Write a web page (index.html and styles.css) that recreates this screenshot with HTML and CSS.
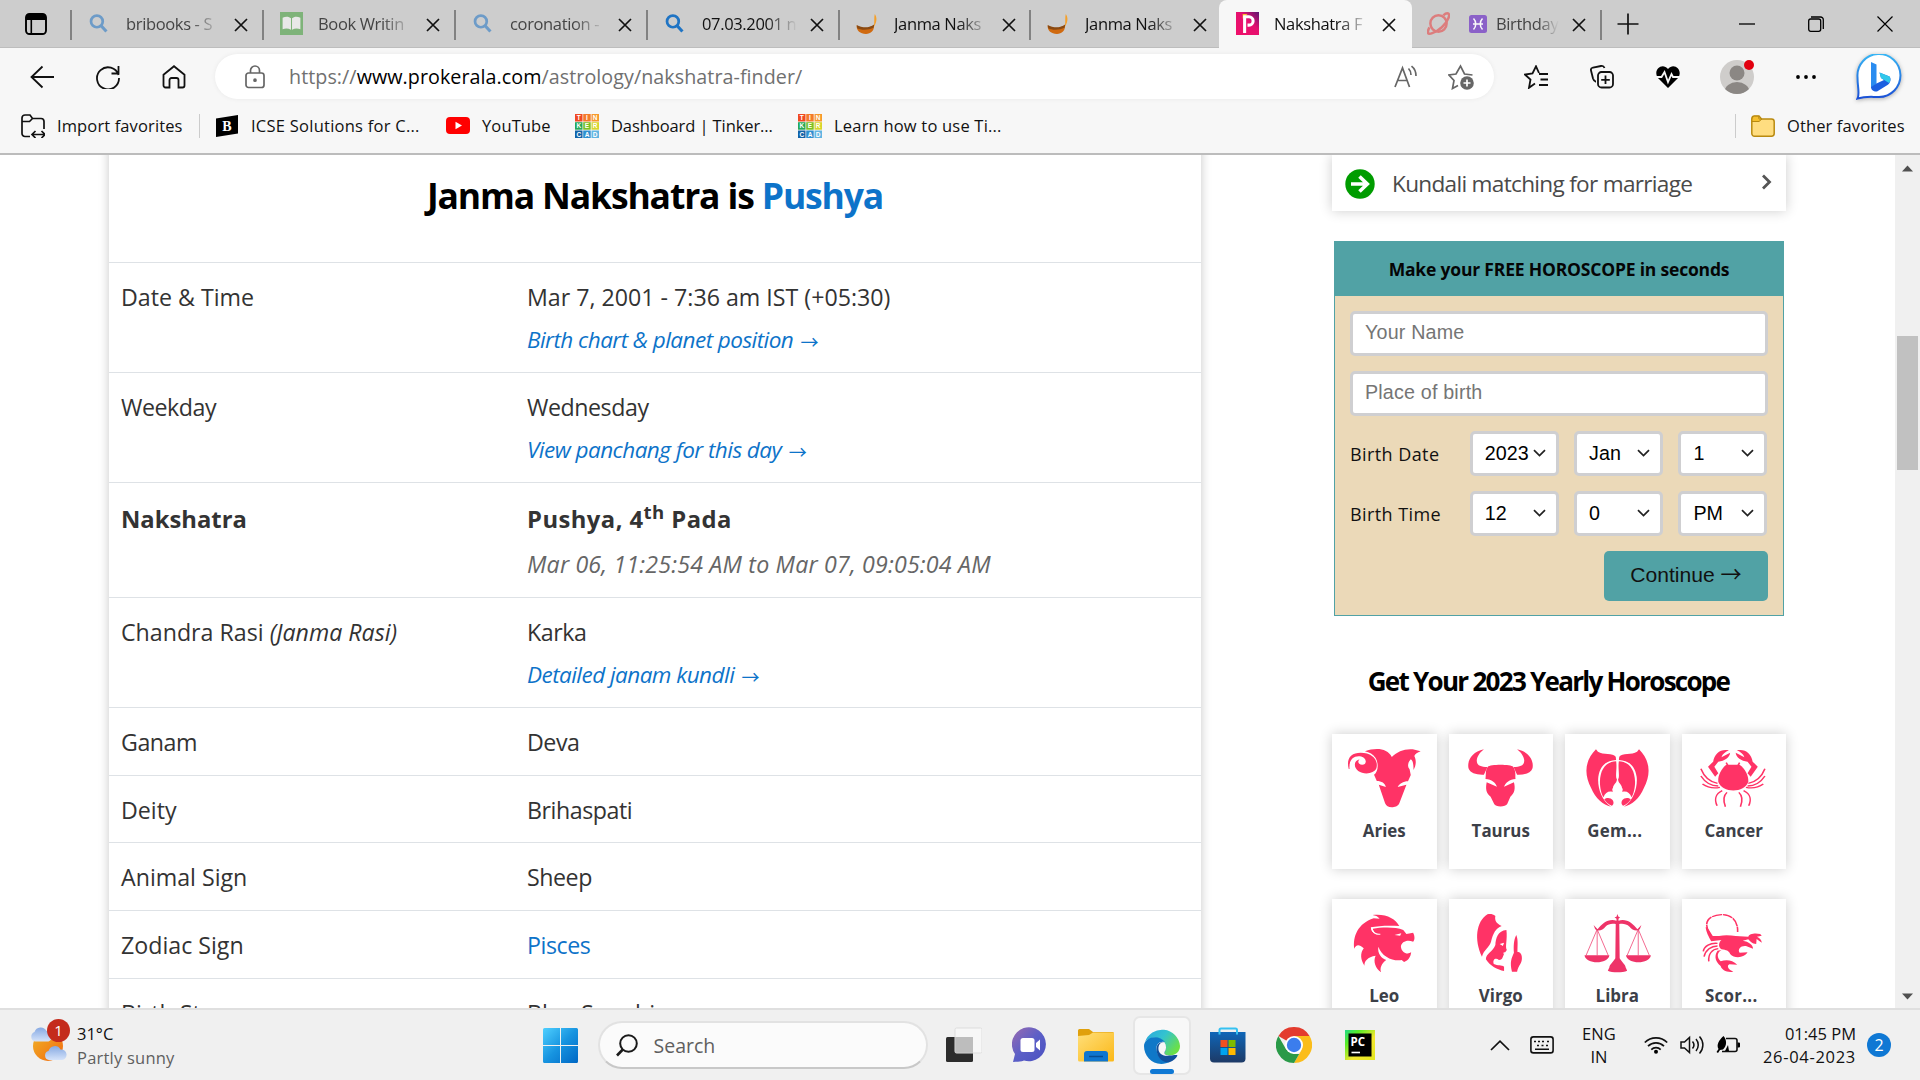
FILE: index.html
```html
<!DOCTYPE html>
<html lang="en">
<head>
<meta charset="utf-8">
<title>Nakshatra Finder</title>
<link rel="stylesheet" href="styles.css">
</head>
<body>
<svg class="defs" width="0" height="0" aria-hidden="true">
  <defs>
    <symbol id="x" viewBox="0 0 14 14"><path d="M1 1L13 13M13 1L1 13" fill="none" stroke="currentColor" stroke-width="1.7"/></symbol>
    <symbol id="mag" viewBox="0 0 22 22"><g fill="none" stroke="#1f74c4"><circle cx="8.500" cy="9" r="5.600" stroke-width="2.600"/><path d="M12.600 13.200L17.600 18.600" stroke-width="3"/></g></symbol>
    <symbol id="lamp" viewBox="0 0 22 22"><path d="M18 2C20 5 20.500 9 17 14.500C18 9 17 5 18 2Z" fill="#f5a02a"/><path d="M.5 13C5 16 13 16 17 12.500C18 18 14 21 9.500 21C4 21 .5 18 .5 13Z" fill="#d06a10"/><path d="M.7 12.500C6 15.500 13 15.500 17.300 12L17 14.800C12 17.500 5 17.500 1.200 15.500Z" fill="#8a4a12"/></symbol>
    <symbol id="tinker" viewBox="0 0 24 24">
      <path fill="#f04923" d="M0 0h7.500v7.500H0z"/><path fill="#f47b2a" d="M8.200 0h7.500v7.500H8.200z"/><path fill="#f79a2c" d="M16.500 0H24v7.500h-7.500z"/>
      <path fill="#26a95a" d="M0 8.200h7.500v7.500H0z"/><path fill="#7cc023" d="M8.200 8.200h7.500v7.500H8.200z"/><path fill="#d8d62d" d="M16.500 8.200H24v7.500h-7.500z"/>
      <path fill="#1263a8" d="M0 16.500h7.500V24H0z"/><path fill="#2f8fd0" d="M8.200 16.500h7.500V24H8.200z"/><path fill="#62b5e2" d="M16.500 16.500H24V24h-7.500z"/>
      <g class="tk"><text x="3.800" y="6.200">T</text><text x="12" y="6.200">I</text><text x="20.200" y="6.200">N</text><text x="3.800" y="14.400">K</text><text x="12" y="14.400">E</text><text x="20.200" y="14.400">R</text><text x="3.800" y="22.700">C</text><text x="12" y="22.700">A</text><text x="20.200" y="22.700">D</text></g>
    </symbol>
    <symbol id="chev" viewBox="0 0 13 8"><path d="M1 1.200L6.500 6.600L12 1.200" fill="none" stroke="#222" stroke-width="1.700"/></symbol>
    <linearGradient id="gWin" x1="0" y1="0" x2="1" y2="1"><stop offset="0" stop-color="#4fd0ff"/><stop offset=".5" stop-color="#1794e0"/><stop offset="1" stop-color="#0067c4"/></linearGradient>
    <linearGradient id="gCloud" x1="0" y1="0" x2="0" y2="1"><stop offset="0" stop-color="#86a9e2"/><stop offset="1" stop-color="#d5e3fa"/></linearGradient>
    <linearGradient id="gSun" x1="0" y1="0" x2="1" y2="1"><stop offset="0" stop-color="#f0b429"/><stop offset="1" stop-color="#f2680e"/></linearGradient>
    <linearGradient id="gChat" x1="0" y1="0" x2="1" y2="1"><stop offset="0" stop-color="#9b6bb0"/><stop offset=".5" stop-color="#5b5fc7"/><stop offset="1" stop-color="#4a50c0"/></linearGradient>
    <linearGradient id="gFold" x1="0" y1="0" x2="1" y2="1"><stop offset="0" stop-color="#ffdf7a"/><stop offset="1" stop-color="#fbb818"/></linearGradient>
    <linearGradient id="gEdgeA" x1="0" y1="0" x2="1" y2=".6"><stop offset="0" stop-color="#2aa6e0"/><stop offset=".5" stop-color="#33c3cf"/><stop offset="1" stop-color="#6be046"/></linearGradient>
    <linearGradient id="gStore" x1="0" y1="0" x2="0" y2="1"><stop offset="0" stop-color="#0f66b8"/><stop offset="1" stop-color="#1d3a66"/></linearGradient>
    <linearGradient id="gPc" x1="0" y1="0" x2="1" y2="1"><stop offset="0" stop-color="#21d789"/><stop offset=".25" stop-color="#58ec26"/><stop offset=".6" stop-color="#f4e72f"/><stop offset="1" stop-color="#e3e61f"/></linearGradient>
    <linearGradient id="gBing" x1="0" y1="0" x2="0" y2="1"><stop offset="0" stop-color="#38b6f5"/><stop offset="1" stop-color="#1a4fd6"/></linearGradient>
    <linearGradient id="gProk" x1="0" y1="1" x2="1" y2="0"><stop offset="0" stop-color="#f0106a"/><stop offset=".6" stop-color="#e4106f"/><stop offset="1" stop-color="#5a1670"/></linearGradient>
  </defs>
</svg>

<header class="tabs">
  <div class="tab-menu"><svg width="22" height="22" viewBox="0 0 22 22"><rect x="1" y="1" width="20" height="20" rx="3.500" fill="none" stroke="#000" stroke-width="1.900"/><path d="M1 7V4a3 3 0 0 1 3-3h14a3 3 0 0 1 3 3v3z"/><path d="M6.300 7v14" stroke="#000" stroke-width="1.600"/></svg></div>
  <div class="tab dim"><svg class="fav" viewBox="0 0 22 22"><use href="#mag"/></svg><span class="tab-t">bribooks - S</span><svg class="tab-x"><use href="#x"/></svg></div>
  <div class="tab dim"><svg class="fav" viewBox="0 0 22 22"><path fill="#3f9e35" d="M0 0h22v22H0z"/><path fill="#fff" d="M2.500 5.500C5.500 4 8.500 4.200 10.500 6v11C8 15.600 5 15.600 2.500 16.500zM19.500 5.500C16.500 4 13.500 4.200 11.500 6v11C14 15.600 17 15.600 19.500 16.500z"/></svg><span class="tab-t">Book Writin</span><svg class="tab-x"><use href="#x"/></svg></div>
  <div class="tab dim"><svg class="fav" viewBox="0 0 22 22"><use href="#mag"/></svg><span class="tab-t">coronation -</span><svg class="tab-x"><use href="#x"/></svg></div>
  <div class="tab"><svg class="fav" viewBox="0 0 22 22"><use href="#mag"/></svg><span class="tab-t">07.03.2001 n</span><svg class="tab-x"><use href="#x"/></svg></div>
  <div class="tab slim"><svg class="fav" viewBox="0 0 22 22"><use href="#lamp"/></svg><span class="tab-t">Janma Naks</span><svg class="tab-x"><use href="#x"/></svg></div>
  <div class="tab no-sep"><svg class="fav" viewBox="0 0 22 22"><use href="#lamp"/></svg><span class="tab-t">Janma Naks</span><svg class="tab-x"><use href="#x"/></svg></div>
  <div class="tab active"><svg class="fav" viewBox="0 0 24 24"><path fill="url(#gProk)" d="M0 0h24v24H0z"/><path fill="#f8c02a" d="M7 2h5L7 7z"/><path fill="none" stroke="#fff" stroke-width="3.200" d="M9 22V5h4.500a4.300 4.300 0 0 1 0 8.700H12"/></svg><span class="tab-t">Nakshatra F</span><svg class="tab-x"><use href="#x"/></svg></div>
  <div class="tab dim last"><svg class="fav" viewBox="0 0 24 24"><g fill="none" stroke="#ea3d3d" stroke-width="2.600"><circle cx="12" cy="12" r="8.500"/><path d="M17 3.500C21 0 24.500 1 22.500 6C20 13 12 20 5.500 22C0 24 0 21 2.500 16"/></g></svg><span class="pisces"><svg width="18" height="18" viewBox="0 0 18 18"><rect width="18" height="18" rx="2.500" fill="#8456c8"/><path d="M4.500 3.500c3 3 3 8 0 11M13.500 3.500c-3 3-3 8 0 11M4 9h10" stroke="#fff" stroke-width="1.500" fill="none"/></svg></span><span class="tab-t">Birthday</span><svg class="tab-x"><use href="#x"/></svg></div>
  <svg class="plus" width="22" height="22" viewBox="0 0 22 22"><path d="M11 .5v21M.5 11h21" stroke="#111" stroke-width="1.700"/></svg>
  <div class="win">
    <svg width="16" height="16" viewBox="0 0 16 16"><path d="M0 8h16" stroke="#000" stroke-width="1.300"/></svg>
    <svg width="16" height="16" viewBox="0 0 16 16"><g fill="none" stroke="#000" stroke-width="1.300"><rect x=".7" y="3" width="12" height="12.300" rx="2"/><path d="M3 1h9.500A2.700 2.700 0 0 1 15.300 3.700V13"/></g></svg>
    <svg width="16" height="16" viewBox="0 0 16 16"><path d="M.5 .5L15.500 15.500M15.500 .5L.5 15.500" stroke="#000" stroke-width="1.200"/></svg>
  </div>
</header>

<nav class="toolbar">
  <svg class="ic" viewBox="0 0 24 24"><path d="M12.500 1.500L1.500 12L12.500 22.500M1.500 12H24"/></svg>
  <svg class="ic" viewBox="0 0 24 24"><path d="M22.500 10A11 11 0 1 0 23 13M22.500 1v7.500h-7"/></svg>
  <svg class="ic" viewBox="0 0 24 24"><path d="M1.500 9.800L12 1.200L22.500 9.800V20.500a2 2 0 0 1-2 2h-4v-7.500a2 2 0 0 0-2-2h-5a2 2 0 0 0-2 2v7.500h-4a2 2 0 0 1-2-2z"/></svg>
  <div class="pill">
    <svg class="ic grey lock" viewBox="0 0 22 24"><rect x="2" y="8" width="18" height="14.500" rx="2.500"/><path d="M6.500 8V5.500a4.500 4.500 0 0 1 9 0V8"/><circle cx="11" cy="15.200" r="1" fill="#555"/></svg>
    <span class="url">https://<b>www.prokerala.com</b>/astrology/nakshatra-finder/</span>
    <svg class="ic grey read" viewBox="0 0 24 24"><path d="M1 22L8.500 3L15.500 22M3.500 15.500h9.500M14.500 3.500c1.700 1.700 2.500 4 2.500 6.500M17.500 1.200C20.500 3.500 22 7 22 11"/></svg>
    <svg class="ic grey star" viewBox="0 0 26 26"><path d="M10 21.500l-5.500 3 1.500-8L1 11l7-1L12.500 2l4 8 8 1"/><circle cx="19" cy="19" r="6.800" fill="#666" stroke="none"/><path d="M19 15.500v7M15.500 19h7" stroke="#fff"/></svg>
  </div>
  <div class="acts">
    <svg class="ic" viewBox="0 0 24 24"><path d="M11 18.500L5 22.800L6.500 14.500L.9 9.500L8.500 8.500L12 1.300L15 8M15 9h9M16.500 14.500H24M15 20h9"/></svg>
    <svg class="ic" viewBox="0 0 24 24"><path d="M6 16.500H5.500C4 16 3.500 15 3 13.500L1 5.500C.6 4 1.500 3 3 2.500L11 1c2-.4 3 .6 3.500 2"/><rect x="8" y="7" width="15" height="15.500" rx="3.500"/><path d="M15.500 10.500v8.500M11.200 14.800h8.600"/></svg>
    <svg class="ic" viewBox="0 0 24 24"><path d="M12 23L1.500 12.500C-3 5 6-3 12 4C18-3 27 5 22.500 12.500z" fill="#000" stroke="none"/><path d="M0 12h5.500l3-5 3.500 10 3.500-8 1.500 3H24" stroke="#f7f7f7"/></svg>
  </div>
  <div class="avatar"><svg width="34" height="34" viewBox="0 0 34 34"><clipPath id="av"><circle cx="17" cy="17" r="17"/></clipPath><g clip-path="url(#av)"><path fill="#cfcdcb" d="M0 0h34v34H0z"/><circle cx="17" cy="13" r="7.500" fill="#8b8784"/><ellipse cx="17" cy="32" rx="12.500" ry="10" fill="#8b8784"/></g></svg><i class="dot"></i></div>
  <svg class="more" width="22" height="6" viewBox="0 0 22 6"><circle cx="3" cy="3" r="1.900"/><circle cx="11" cy="3" r="1.900"/><circle cx="19" cy="3" r="1.900"/></svg>
  <svg class="bing" width="46" height="46" viewBox="0 0 46 46"><path d="M1.500 44.500C4 40 1.500 34 1.500 23A21.500 21.500 0 1 1 23 43C15 43 10 42 1.500 44.500Z" fill="#fff" stroke="url(#gBing)" stroke-width="2"/><path d="M15 8L20.500 10.500V30L15 34Z" fill="#2a8cf0"/><path d="M15 33L20.500 29.500L28 26L25 24L23.500 18.500L33.500 22.500C35.500 25 34.500 29 31.500 31L21 37.500C18 38 15 36 15 33Z" fill="#1b5fe0"/><path d="M25 24L23.500 18.500L33.500 22.500C35 25 34 28 33 29Z" fill="#30c8ea"/></svg>
</nav>

<div class="bookmarks">
  <svg class="bm" viewBox="0 0 24 24"><g fill="none" stroke="#111" stroke-width="1.700"><path d="M9 22.500H4a3 3 0 0 1-3-3V4a3 3 0 0 1 3-3h5l2.500 3.500H20a3 3 0 0 1 3 3V15M1 7.500h7.500L11.500 4.500M11.500 20.500h12M14.500 17l-3.500 3.500 3.500 3.500M20.500 17l3.500 3.500-3.500 3.500"/></g></svg><span class="bt t1">Import favorites</span>
  <i class="vsep"></i>
  <svg class="bm b-ic" viewBox="0 0 22 22"><path d="M0 3.500L22 0V18.500L0 22Z"/><text x="11" y="16" class="bserif">B</text></svg><span class="bt t2">ICSE Solutions for C...</span>
  <svg class="bm yt" viewBox="0 0 24 17"><rect width="24" height="17" rx="4" fill="#f00"/><path d="M9.500 4.800L16 8.500L9.500 12.200z" fill="#fff"/></svg><span class="bt t3">YouTube</span>
  <svg class="bm tkc"><use href="#tinker"/></svg><span class="bt t4">Dashboard | Tinker...</span>
  <svg class="bm tkc"><use href="#tinker"/></svg><span class="bt t5">Learn how to use Ti...</span>
  <div class="other"><i class="vsep"></i><svg class="bm" viewBox="0 0 24 22"><path d="M.8 4A3 3 0 0 1 3.500 1H8l2.500 3h10a2.700 2.700 0 0 1 2.700 2.700V18.500a2.700 2.700 0 0 1-2.700 2.700H3.500A2.700 2.700 0 0 1 .8 18.500z" fill="#ffdd80" stroke="#b98a10" stroke-width="1.500"/><path d="M1 6.500h7L11 4H8L7.500 1.200H3.500Q1 1.500 1 4z" fill="#f5bf2e" stroke="#b98a10"/></svg><span class="bt">Other favorites</span></div>
</div>

<div class="page">
  <main class="card">
    <h1>Janma Nakshatra is <em>Pushya</em></h1>
    <div class="row two"><div>Date &amp; Time</div><div>Mar 7, 2001 - 7:36 am IST (+05:30)<br><a class="it">Birth chart &amp; planet position <span class="arr">→</span></a></div></div>
    <div class="row two"><div class="w">Weekday</div><div><span class="w">Wednesday</span><br><a class="it">View panchang for this day <span class="arr">→</span></a></div></div>
    <div class="row nak"><div><b>Nakshatra</b></div><div><b class="pada">Pushya, 4<sup>th</sup> Pada</b><br><span class="it gr">Mar 06, 11:25:54 AM to Mar 07, 09:05:04 AM</span></div></div>
    <div class="row two"><div>Chandra Rasi <i>(Janma Rasi)</i></div><div><span class="w">Karka</span><br><a class="it">Detailed janam kundli <span class="arr">→</span></a></div></div>
    <div class="row"><div class="w">Ganam</div><div class="w">Deva</div></div>
    <div class="row"><div>Deity</div><div class="w">Brihaspati</div></div>
    <div class="row"><div>Animal Sign</div><div class="w">Sheep</div></div>
    <div class="row"><div>Zodiac Sign</div><div class="w"><a>Pisces</a></div></div>
    <div class="row"><div>Birth Star</div><div>Blue Sapphire</div></div>
  </main>
  <aside class="side">
    <div class="kund"><svg width="30" height="30" viewBox="0 0 30 30"><circle cx="15" cy="15" r="14.700" fill="#009c00"/><path d="M6 15h16M14.500 7.500L22.300 15l-7.800 7.500" fill="none" stroke="#fff" stroke-width="3.600"/></svg><span>Kundali matching for marriage</span><svg class="kc" width="11" height="16" viewBox="0 0 11 16"><path d="M2 1.500L8.500 8L2 14.500" fill="none" stroke="#555" stroke-width="2.800"/></svg></div>
    <form class="form">
      <div class="fh">Make your FREE HOROSCOPE in seconds</div>
      <div class="fb">
        <div class="inp">Your Name</div>
        <div class="inp">Place of birth</div>
        <div class="sel"><label>Birth Date</label><div>2023<svg><use href="#chev"/></svg></div><div>Jan<svg><use href="#chev"/></svg></div><div>1<svg><use href="#chev"/></svg></div></div>
        <div class="sel"><label>Birth Time</label><div>12<svg><use href="#chev"/></svg></div><div>0<svg><use href="#chev"/></svg></div><div>PM<svg><use href="#chev"/></svg></div></div>
        <div class="btn">Continue <span class="arr">→</span></div>
      </div>
    </form>
    <h2>Get Your 2023 Yearly Horoscope</h2>
    <div class="signs">
      <div class="sign"><svg viewBox="112.500 321 200 186" preserveAspectRatio="none"><path d="M122 387C115 355 128 338 152 338C180 338 198 358 192 385C186 402 160 405 146 393C134 382 134 362 150 358C143 364 146 374 156 374C170 374 168 352 150 349C132 347 122 362 124 387Z"/><path d="M163 334C190 322 220 324 231 351C245 335 262 326 284 328L304 334C296 338 290 342 288 348C294 362 292 378 286 390C286 375 285 362 279 358C271 368 270 380 276 388L279 405L272 424C260 424 250 432 246 441L268 434L250 490C246 500 238 502 231 502C222 502 217 498 214 490L198 434L216 441C214 430 205 423 193 423L186 404C197 396 198 370 190 354C184 343 174 337 163 334Z"/></svg><span>Aries</span></div>
      <div class="sign"><svg viewBox="407 321 200 186" preserveAspectRatio="none"><path d="M465 328C435 335 422 362 426 385C430 400 447 405 465 404L474 381C455 381 446 375 447 360C449 345 458 335 465 328Z"/><path d="M549 328C579 335 592 362 588 385C584 400 567 405 549 404L540 381C559 381 568 375 567 360C565 345 556 335 549 328Z"/><path d="M475 380C480 372 534 372 539 380C547 395 544 405 545 417C530 418 520 428 516 440L541 427C545 445 543 460 532 470L524 492C520 502 494 502 491 492L482 470C470 460 469 445 472 427L498 440C494 428 485 418 469 417C471 400 468 392 475 380Z"/></svg><span>Taurus</span></div>
      <div class="sign"><svg viewBox="701.500 321 200 186" preserveAspectRatio="none"><g id="gem"><path d="M747 328C720 360 715 400 735 445C745 475 765 495 785 500C760 480 750 440 753 410C757 380 770 362 798 360L797 350C790 338 765 345 752 335Z"/><path d="M798 364C770 366 758 390 757 425C757 445 761 462 766 472C770 458 780 452 789 456C790 450 786 448 790 444C791 432 800 430 800 418C795 410 801 385 798 364Z"/><path d="M768 478C775 471 785 474 789 480C794 488 790 496 787 497C778 494 772 486 768 478Z"/></g><use href="#gem" transform="translate(1603 0) scale(-1 1)"/></svg><span class="ell">Gem...</span></div>
      <div class="sign"><svg viewBox="996.500 321 200 186" preserveAspectRatio="none"><path d="M1078 374L1112 374C1125 385 1135 405 1134 425C1125 460 1067 460 1058 425C1056 405 1067 385 1078 374Z"/><g id="can"><path d="M1085 331C1065 325 1048 340 1045 365L1032 380L1050 410L1058 400L1048 380L1058 365C1074 363 1087 352 1088 338L1066 352C1068 342 1076 336 1085 331Z"/><path d="M1014 386C1022 410 1035 425 1056 430M1014 408C1025 428 1040 438 1058 438M1018 432C1030 442 1045 446 1062 442M1068 452C1050 462 1048 480 1055 497M1080 457C1068 470 1072 488 1076 500M1078 368L1083 378" fill="none" stroke="#ff3366" stroke-width="4"/></g><use href="#can" transform="translate(2190 0) scale(-1 1)"/></svg><span>Cancer</span></div>
      <div class="sign"><svg viewBox="112.500 816 200 186" preserveAspectRatio="none"><path d="M182 825C215 820 240 835 250 858C220 856 195 858 178 862C178 878 190 885 202 883C190 882 184 876 183 866C205 862 240 860 260 870L268 882L285 878C290 890 289 900 285 905C270 898 255 905 254 920C256 938 270 945 280 937C279 950 273 962 262 966L256 960C235 965 205 950 197 920C194 940 205 955 217 960C205 970 200 985 204 997C190 985 183 965 190 947C170 950 160 965 162 977C152 960 150 940 160 925C147 910 140 915 136 926C132 890 145 850 185 835L200 836C196 829 189 826 182 825Z"/><path d="M180 863C182 878 190 884 202 883" fill="none" stroke="#fff" stroke-width="3"/><path d="M238 885L255 880L252 887Z" fill="#fff"/></svg><span>Leo</span></div>
      <div class="sign"><svg viewBox="407 816 200 186" preserveAspectRatio="none"><path d="M474 823C445 845 440 900 460 950C464 930 480 920 483 905C488 880 495 865 510 858C495 850 492 840 494 828C487 821 480 821 474 823Z"/><path d="M522 870C500 872 495 895 494 915C488 935 470 940 470 958C480 978 500 990 516 993L516 980C510 974 500 978 490 972C486 958 495 952 503 960C515 960 510 948 523 930C518 920 525 900 522 870Z"/><path d="M505 912L516 908L513 918ZM514 938L520 936L516 944Z" fill="#fff"/><path d="M547 885C540 900 540 920 541 938C535 955 530 965 536 995L549 995C552 975 563 970 561 950C560 938 553 935 550 936C550 915 552 900 547 885Z"/></svg><span>Virgo</span></div>
      <div class="sign lib"><svg viewBox="701.500 816 200 186" preserveAspectRatio="none"><path d="M801 822L804 830L808 832L804 836L804 842C825 835 840 850 852 868L862 855L858 868C850 875 838 870 832 860C824 850 812 850 806 852L807 955C812 965 822 975 822 982L826 992C815 998 787 998 777 992L781 982C781 975 791 965 796 955L797 852C790 850 778 850 771 860C765 870 753 875 745 868L741 855L751 868C763 850 778 835 799 842L799 836L794 832L799 830Z"/><path d="M718 946H781C778 974 721 974 718 946ZM823 946H886C883 974 826 974 823 946Z"/><path d="M750 868L722 946M750 868L778 946M750 868V946M854 868L826 946M854 868L882 946M854 868V946" fill="none" stroke="#ee3368" stroke-width="2"/></svg><span>Libra</span></div>
      <div class="sign"><svg viewBox="996.500 816 200 186" preserveAspectRatio="none"><path d="M1036 880C1020 850 1030 826 1066 824C1098 824 1108 850 1107 876" fill="none" stroke="#ff3366" stroke-width="4" stroke-dasharray="26 2"/><path d="M1026 862L1030 862L1044 888L1060 888C1075 884 1090 886 1102 888L1134 890C1136 882 1150 878 1164 882L1168 887L1156 890C1164 895 1168 900 1168 908L1155 897L1154 912C1144 912 1138 904 1134 898L1120 902C1135 905 1146 914 1146 926L1128 918C1115 916 1106 928 1112 938L1132 937C1126 952 1100 958 1088 942C1085 932 1078 930 1066 928C1056 920 1060 905 1066 900L1040 904C1034 890 1028 880 1026 862Z"/><path d="M1066 930C1052 940 1056 955 1064 964C1078 958 1094 960 1106 974L1086 973C1078 978 1084 990 1096 995C1080 998 1066 990 1064 978C1052 966 1046 950 1056 932Z"/><path d="M1056 910C1038 908 1022 918 1020 934M1056 918C1040 918 1026 930 1022 950M1058 926C1042 928 1032 942 1034 964" fill="none" stroke="#ff3366" stroke-width="4"/></svg><span class="ell">Scor...</span></div>
    </div>
  </aside>
  <div class="sb"><svg width="11" height="7" viewBox="0 0 11 7"><path d="M0 6.500L5.500 .5L11 6.500z"/></svg><i></i><svg width="11" height="7" viewBox="0 0 11 7"><path d="M0 .5L5.500 6.500L11 .5z"/></svg></div>
</div>

<footer class="taskbar">
  <div class="weather"><div class="wic"><svg width="38" height="36" viewBox="0 0 38 36"><circle cx="19" cy="19" r="15" fill="url(#gSun)"/><path d="M6 14.500a5 5 0 0 1-.5-9.500a6.500 6.500 0 0 1 12-1a5.500 5.500 0 0 1 2 10.500z" fill="url(#gCloud)"/><path d="M20 33a4.600 4.600 0 0 1-.5-9a6.500 6.500 0 0 1 12-1.500a5.300 5.300 0 0 1 1.500 10.500z" fill="url(#gCloud)"/></svg><b>1</b></div><div class="wt"><span>31°C</span><span class="gr2">Partly sunny</span></div></div>
  <svg class="start" width="35" height="35" viewBox="0 0 35 35"><path fill="url(#gWin)" d="M1.500 0H17V17H0V1.500A1.500 1.500 0 0 1 1.500 0ZM18 0H33.500A1.500 1.500 0 0 1 35 1.500V17H18ZM0 18H17V35H1.500A1.500 1.500 0 0 1 0 33.500ZM18 18H35V33.500A1.500 1.500 0 0 1 33.500 35H18Z"/></svg>
  <div class="search"><svg width="22" height="23" viewBox="0 0 22 23"><g fill="none" stroke="#1a1a1a"><circle cx="12.500" cy="9.500" r="8.300" stroke-width="2"/><path d="M6.800 15.500L1 21.500" stroke-width="2.600"/></g></svg><span>Search</span></div>
  <div class="apps">
    <svg width="36" height="36" viewBox="0 0 36 36"><rect y="10" width="27" height="25" rx="1.500" fill="#2c2c2c"/><rect x="9" y="1" width="27" height="25" rx="1.500" fill="#fafafa" fill-opacity=".72" stroke="#ddd"/><path d="M9.500 10H27V25.500H9.500z" fill="#bdbdbd"/></svg>
    <svg width="36" height="36" viewBox="0 0 36 36"><path d="M1 35L3 27A17 17 0 1 1 12 33.500C8 35 5 34.500 1 35Z" fill="url(#gChat)"/><rect x="8.500" y="11" width="14" height="14" rx="2.500" fill="#fff"/><path d="M24 16l4-3.500v11L24 20z" fill="#fff"/></svg>
    <svg width="36" height="36" viewBox="0 0 36 36"><path d="M0 3.500A1.500 1.500 0 0 1 1.500 2H11l4 3H34.500A1.500 1.500 0 0 1 36 6.500V12H0z" fill="#e0a00c"/><path d="M0 9L11 8L15 5.500H36V33a1.500 1.500 0 0 1-1.500 1.500h-33A1.500 1.500 0 0 1 0 33z" fill="url(#gFold)"/><path d="M6 34.500V27a3 3 0 0 1 3-3h18a3 3 0 0 1 3 3v7.500z" fill="#0f76cf"/><path d="M11 29.500h14" stroke="#084e91" stroke-width="1.500"/></svg>
    <div class="edge"><svg width="36" height="36" viewBox="0 0 36 36"><path d="M1 14A18 18 0 0 1 36 18C36 24 31 27.500 26 27.500C21 27.500 19.500 25.500 21 23.500C23 20 22 13 15 10.500C9 8.500 3.500 11 1 14Z" fill="url(#gEdgeA)"/><path d="M0 18C0 9 15 5.500 21 14C15 12.500 12 17 12.500 21C13 29 20 35 27 33.500C12 41 0 30 0 18Z" fill="#0f78c8"/><path d="M12.500 21C12.500 16 16 13.500 20 14.500C22 17 22.500 21 21 23.500C19.500 25.500 21 27.500 26 27.500C29 27.500 32 26.500 33.500 27.500C32 30.500 29 33 26 34C18 36 12.500 28 12.500 21Z" fill="#11509c"/><path d="M14.500 19C15 15 18.500 13.500 20.500 14.500C22.500 17.500 22.500 21 20.800 23.500C19.500 25.500 21 27.500 25 27.800C19 29 13.500 25 14.500 19Z" fill="#f7f7f7"/></svg><i></i></div>
    <svg width="36" height="36" viewBox="0 0 36 36"><path d="M0 5H35.500V31.500a4 4 0 0 1-4 4H4a4 4 0 0 1-4-4z" fill="url(#gStore)"/><path d="M9.500 7.500V3A1.500 1.500 0 0 1 11 1.500H25.500A1.500 1.500 0 0 1 27 3V7.500" fill="none" stroke="#35c1f1" stroke-width="2"/><path fill="#f25022" d="M10.500 13h7v7h-7z"/><path fill="#7fba00" d="M18.500 13h7v7h-7z"/><path fill="#00a4ef" d="M10.500 21h7v7h-7z"/><path fill="#ffb900" d="M18.500 21h7v7h-7z"/></svg>
    <svg width="36" height="36" viewBox="0 0 36 36"><path d="M18 18L2.410 9A18 18 0 0 1 33.590 9Z" fill="#e33b2e"/><path d="M18 9H33.590A18 18 0 0 1 18 36L25.800 22.500Z" fill="#fbbd1a"/><path d="M2.410 9L10.200 22.500L18 27H23.200L18 36A18 18 0 0 1 2.410 9Z" fill="#2a9a48"/><circle cx="18" cy="18" r="9" fill="#fff"/><circle cx="18" cy="18" r="7.200" fill="#3b7ded"/></svg>
    <svg width="36" height="36" viewBox="0 0 36 36"><rect x="3" y="3" width="30" height="30" fill="url(#gPc)"/><rect x="6.500" y="6.500" width="23" height="23" fill="#000"/><text x="8.500" y="18.500" class="pc">PC</text><path d="M9.500 25.500h8.500" stroke="#fff" stroke-width="1.600"/></svg>
  </div>
  <div class="tray">
    <svg class="k1" width="20" height="11" viewBox="0 0 20 11"><path d="M1 10L10 1.200L19 10" fill="none" stroke="#111" stroke-width="1.700"/></svg>
    <svg class="k2" width="24" height="18" viewBox="0 0 24 18"><rect x=".9" y=".9" width="22.200" height="16" rx="2.500" fill="none" stroke="#111" stroke-width="1.600"/><path d="M4 5.500h2M8 5.500h2M12 5.500h2M17 5.500h2M7 9.500h2M11.500 9.500h2M16 9.500h2M5 13.200h14" stroke="#111" stroke-width="1.600"/></svg>
    <div class="lang">ENG<br>IN</div>
    <svg class="k3" width="24" height="18" viewBox="0 0 24 18"><g fill="none" stroke="#111" stroke-width="1.700"><path d="M.8 6.500a16 16 0 0 1 22.400 0M4 10.200a11.400 11.400 0 0 1 16 0M7.300 13.600a6.700 6.700 0 0 1 9.400 0"/></g><circle cx="12" cy="15.700" r="2"/></svg>
    <svg class="k4" width="24" height="20" viewBox="0 0 24 20"><g fill="none" stroke="#111" stroke-width="1.500"><path d="M1 7v6h3.500l5 4.500v-15L4.500 7z"/><path d="M12.500 6.500c1.700 2 1.700 5 0 7M16 4c3 3.500 3 8.500 0 12M19.500 1.500c4.500 5 4.500 12 0 17"/></g></svg>
    <svg class="k5" width="24" height="18" viewBox="0 0 24 18"><path d="M10 2.500h9a2 2 0 0 1 2 2v9a2 2 0 0 1-2 2H6" fill="none" stroke="#111" stroke-width="1.600"/><path d="M21.500 6.500h1.500a1 1 0 0 1 1 1v3a1 1 0 0 1-1 1h-1.500zM7.500 0C11 4 11 10 7 13.500L4 14L2 17L.5 16L2.500 13C0 9 3 4 7.500 0ZM12 9l-3 6h4z"/></svg>
    <div class="clock">01:45 PM<br><span class="date">26-04-2023</span></div>
    <b class="num">2</b>
  </div>
</footer>
</body>
</html>
```
FILE: styles.css
```css
* { box-sizing: border-box; }
body { margin: 0; width: 1920px; height: 1080px; overflow: hidden; background: #fff; color: #111; font-family: "Open Sans", "Noto Sans", sans-serif; display: flex; flex-direction: column; }
svg { display: block; flex: none; }
.defs { position: absolute; }

/* tab strip */
.tabs { height: 48px; flex: none; background: #cdcdcd; display: flex; align-items: center; border-bottom: 1px solid #bdbdbd; }
.tab-menu { width: 70px; padding-left: 25px; }
.tab { width: 192px; height: 48px; display: flex; align-items: center; position: relative; padding-left: 18px; }
.tab::before { content: ""; position: absolute; left: 0; top: 10px; width: 2px; height: 30px; background: #828282; }
.tab.active::before, .tab.last::before { display: none; }
.fav { width: 23px; height: 23px; }
.tab-t { width: 97px; margin-left: 15px; font-size: 16.500px; letter-spacing: -.35px; color: #111; white-space: nowrap; -webkit-mask-image: linear-gradient(90deg, #000 66%, transparent 98%); mask-image: linear-gradient(90deg, #000 66%, transparent 98%); }
.tab-x { width: 14px; height: 14px; margin-left: 10.500px; margin-top: 2px; color: #111; }
.dim .fav { opacity: .55; }
.dim .tab-t { color: #444; }
.slim { width: 191px; }
.no-sep { width: 190px; }
.tab.active { width: 193px; background: #f7f7f7; border-radius: 8px 8px 0 0; padding-left: 17px; }
.tab.last { width: 191px; padding-left: 15px; }
.tab.last::after { content: ""; position: absolute; right: 1px; top: 10px; width: 2px; height: 30px; background: #828282; }
.pisces { margin-left: 19px; opacity: .9; }
.last .tab-t { width: 64px; margin-left: 9px; }
.last .tab-x { margin-left: 12px; }
.plus { margin-left: 14px; }
.win { margin-left: auto; margin-right: 27px; display: flex; gap: 53px; }

/* toolbar */
.toolbar { height: 57px; flex: none; background: #f7f7f7; display: flex; align-items: center; padding-left: 30px; gap: 42px; }
.ic { width: 24px; height: 24px; fill: none; stroke: #111; stroke-width: 1.800; }
.ic.grey { stroke: #666; stroke-width: 1.700; }
.pill { width: 1279px; height: 45px; margin-left: -13px; border-radius: 23px; background: #fff; display: flex; align-items: center; padding: 0 20px 0 29px; box-shadow: 0 0 5px rgba(0,0,0,.06); }
.lock { width: 22px; }
.url { margin-left: 23px; font-size: 19.700px; letter-spacing: .06px; color: #707070; white-space: nowrap; }
.url b { font-weight: 400; color: #000; }
.read { margin-left: auto; }
.star { width: 26px; height: 26px; margin-left: 30px; }
.acts { display: flex; gap: 42px; margin-left: -12px; }
.avatar { position: relative; margin-left: -2px; }
.dot { position: absolute; right: 0; top: 0; width: 10px; height: 10px; border-radius: 50%; background: #e2000f; }
.more { margin-left: -1px; }
.bing { margin-left: -3px; filter: drop-shadow(0 1px 2px rgba(0,0,0,.3)); }

.bookmarks { height: 50px; flex: none; background: #f7f7f7; border-bottom: 2px solid #bcbcbc; display: flex; align-items: center; padding: 0 0 7px 21px; }
.bm { width: 24px; height: 24px; margin-right: 12px; }
.bt { font-size: 16.500px; letter-spacing: .12px; white-space: nowrap; }
.vsep { width: 1px; height: 24px; background: #ccc; margin: 0 16px; }
.b-ic { width: 22px; height: 22px; margin-right: 13px; }
.yt { height: 17px; }
.bserif { font: bold 14px "Liberation Serif", serif; fill: #fff; text-anchor: middle; }
.tk text { font: bold 6.500px "Liberation Sans", sans-serif; fill: #fff; text-anchor: middle; }
.t1 { width: 126px; }
.t2 { width: 195px; letter-spacing: .25px; }
.t3 { width: 93px; }
.t4 { width: 187px; letter-spacing: -.1px; }
.t5 { letter-spacing: .2px; }
.other { display: flex; align-items: center; margin-left: auto; width: 201px; }
.other .vsep { margin-right: 15px; }

/* page */
.page { height: 853px; flex: none; overflow: hidden; display: flex; padding-left: 109px; background: #fff; }
.card { width: 1092px; height: 1000px; margin-top: -40px; padding-top: 40px; box-shadow: 0 0 10px rgba(0,0,0,.22); color: #333; flex: none; }
h1 { margin: 0; height: 108px; padding-top: 13px; border-bottom: 1px solid #dee2e6; text-align: center; font-size: 35.500px; letter-spacing: -1.150px; line-height: 54px; color: #000; }
h1 em, a { color: #0d73c9; font-style: normal; }
.row { display: grid; grid-template-columns: 406px 1fr; height: 67.700px; padding: 13px 12px 0; border-bottom: 1px solid #dee2e6; font-size: 23.200px; line-height: 42.300px; white-space: nowrap; }
.two { height: 110px; padding-top: 12.500px; }
.nak { height: 115px; line-height: 45.300px; padding-top: 14px; }
.nak b { font-size: 23.800px; }
.nak .pada { letter-spacing: .45px; }
.w { letter-spacing: -.45px; }
.row i { font-style: italic; }
.it { font-style: italic; font-size: 22.500px; letter-spacing: -.540px; }
.gr { color: #666; font-size: 23.200px; letter-spacing: .180px; }
.arr { font-family: "Noto Sans CJK JP", sans-serif; font-style: normal; line-height: 1; }
.it .arr { font-size: 18px; margin-left: 2px; position: relative; top: 1px; }
sup { font-size: 78%; line-height: 0; }

.side { width: 454px; margin-left: 131px; flex: none; }
.kund { height: 56px; display: flex; align-items: center; padding: 1px 14px 0 13px; box-shadow: 0 0 12px rgba(0,0,0,.2); font-size: 22.600px; letter-spacing: -.700px; color: #4a4a4a; white-space: nowrap; }
.kund span { margin-left: 17px; }
.kc { margin-left: auto; margin-top: -4px; }
.form { width: 450px; height: 375px; margin: 30px 2px 0; border: 1px solid #51a2a5; background: #ebd9b8; }
.fh { height: 54px; background: #51a2a5; text-align: center; font-weight: 700; font-size: 17.500px; letter-spacing: -.190px; line-height: 55px; color: #050505; white-space: nowrap; }
.fb { padding: 15px 15px 0; display: flex; flex-direction: column; gap: 15.500px; font-family: "Liberation Sans", Arial, sans-serif; font-size: 19.700px; }
.inp, .sel div { height: 44.500px; background: #fff; border: 3px solid #cfcfd1; border-radius: 5px; padding-left: 12px; line-height: 37px; color: #757575; }
.inp { letter-spacing: .18px; }
.sel { display: grid; grid-template-columns: 104.500px 89px 89px 89px; column-gap: 15.300px; height: 44.500px; }
.sel label { font: 18px/47px "Open Sans", sans-serif; letter-spacing: .42px; height: 44.500px; color: #111; white-space: nowrap; }
.sel div { color: #000; display: flex; align-items: center; justify-content: space-between; padding: 0 10px 0 12px; }
.sel div svg { width: 13px; height: 8px; }
.btn { align-self: flex-end; width: 164px; height: 50px; border-radius: 5px; background: #51a2a5; text-align: center; font-size: 21.100px; line-height: 48px; color: #111; }
h2 { margin: 47px 0 0; padding-right: 21px; text-align: center; font-size: 26px; letter-spacing: -1.720px; line-height: 36px; color: #000; white-space: nowrap; }
.signs { margin-top: 35px; display: grid; grid-template-columns: repeat(4, 104.500px); column-gap: 12px; row-gap: 30px; }
.sign { height: 135px; background: #fff; box-shadow: 0 0 12px rgba(0,0,0,.2); display: flex; flex-direction: column; align-items: center; padding-top: 13px; fill: #ff3366; }
.sign svg { width: 79px; height: 62px; }
.sign span { margin-top: 9px; font-weight: 700; font-size: 16.900px; line-height: 26px; color: #3c4048; }
.sign .ell { margin-right: 5px; letter-spacing: .3px; }
.lib { fill: #ee3368; }
.sb { width: 25px; margin-left: auto; background: #f0f0f0; display: flex; flex-direction: column; align-items: center; padding: 10px 0 8px; fill: #505050; }
.sb i { width: 21px; height: 134px; margin: 164px 0 auto; background: #c1c1c1; }

/* taskbar */
.taskbar { height: 72px; flex: none; background: #f0f0f0; border-top: 2px solid #dfdfdf; display: flex; align-items: center; position: relative; }
.weather { width: 543px; padding-left: 29px; display: flex; align-items: center; }
.wic { position: relative; }
.wic b { position: absolute; left: 18px; top: -8px; width: 23px; height: 23px; border-radius: 50%; background: #c42b1c; color: #fff; font-size: 15px; font-weight: 400; line-height: 23px; text-align: center; }
.wt { margin-left: 10px; padding-top: 1px; font-size: 16.500px; line-height: 24px; display: flex; flex-direction: column; white-space: nowrap; }
.gr2 { color: #5f5f5f; letter-spacing: .220px; }
.search { width: 330px; height: 48px; margin-left: 20px; border: 2px solid #e2e2e2; border-bottom-color: #c8c8c8; border-radius: 24px; background: #fbfbfb; display: flex; align-items: center; padding-left: 16px; font-size: 19.500px; color: #5f5f5f; }
.search span { margin-left: 15.500px; }
.apps { display: flex; align-items: center; gap: 30px; margin-left: 18px; }
.edge { width: 58px; height: 59px; margin: 0 -11px; padding: 10px 9px 0; background: #f8f8f8; border: 2px solid #e6e6e6; border-radius: 7px; position: relative; }
.edge i { position: absolute; left: 15px; bottom: -1px; width: 24px; height: 5px; border-radius: 3px; background: #0f78d4; }
.pc { font: bold 11.500px "Open Sans", sans-serif; fill: #fff; }
.tray { display: flex; align-items: center; margin-left: auto; margin-right: 29px; font-size: 16.500px; line-height: 23px; }
.k2 { margin-left: 20px; }
.lang { margin-left: 27px; width: 36px; text-align: center; }
.k3 { margin-left: 27px; }
.k4, .k5 { margin-left: 12px; }
.clock { margin-left: 23px; text-align: right; white-space: nowrap; }
.date { letter-spacing: .7px; }
.num { margin-left: 11px; width: 24px; height: 24px; border-radius: 50%; background: #0f78d4; color: #fff; font-size: 16px; font-weight: 400; line-height: 24px; text-align: center; }
```
